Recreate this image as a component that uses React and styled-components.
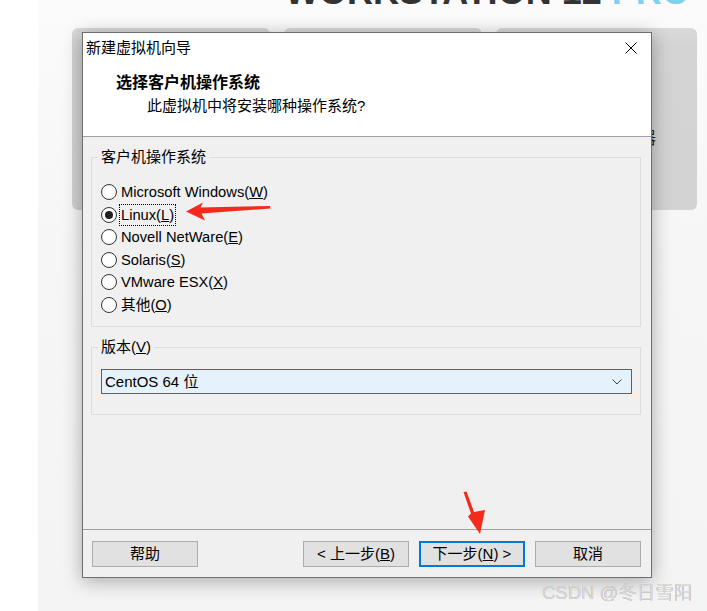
import React from 'react';
import styled, { createGlobalStyle } from 'styled-components';

const GlobalStyle = createGlobalStyle`
  html, body {
    margin: 0;
    padding: 0;
  }
  body {
    background: #fff;
    font-family: "Liberation Sans", "Noto Sans CJK SC", sans-serif;
  }
`;

const Page = styled.div`
  position: relative;
  width: 707px;
  height: 611px;
  overflow: hidden;
  background: #fff;
`;

const Stage = styled.div`
  margin-left: 38px;
  height: 100%;
  background: linear-gradient(#fbfbfb, #f6f6f6 40%, #f4f4f4);
`;

const Banner = styled.div`
  height: 10px;
  padding-left: 247px;
  display: flex;
  align-items: flex-end;
  overflow: hidden;
`;

const BannerText = styled.div`
  font-family: "Liberation Sans", sans-serif;
  font-size: 36px;
  font-weight: bold;
  line-height: 1;
  white-space: nowrap;
  color: #333;

  span {
    color: #7fd2ee;
  }
`;

const TileRow = styled.div`
  margin-top: 18px;
  padding-left: 34px;
  display: flex;
  gap: 14px;
`;

const Tile = styled.div`
  width: ${({ $w }) => $w}px;
  height: 182px;
  border-radius: 6px;
  background: linear-gradient(#dadada, #d4d4d4 10%, #d3d3d3);
  display: flex;
  justify-content: center;
  padding-top: 100px;
  box-sizing: border-box;
`;

const TileLabel = styled.div`
  font-size: 17px;
  line-height: 22px;
  color: #222;
  white-space: nowrap;
`;

const Dialog = styled.div`
  position: absolute;
  left: 82px;
  top: 32px;
  width: 570px;
  height: 546px;
  box-sizing: border-box;
  border: 1px solid #6f6f6f;
  background: #f0f0f0;
  box-shadow: 0 3px 18px rgba(0, 0, 0, 0.32);
  display: flex;
  flex-direction: column;
  font-size: 15px;
  color: #000;
`;

const Header = styled.div`
  background: #fff;
  border-bottom: 1px solid #a0a0a0;
  padding-bottom: 20px;
`;

const TitleBar = styled.div`
  height: 30px;
  padding-left: 3px;
  padding-right: 14px;
  display: flex;
  align-items: center;
  justify-content: space-between;
  line-height: 20px;
`;

const Heading = styled.div`
  margin-top: 10px;
  padding-left: 33px;
  font-size: 16px;
  font-weight: bold;
  line-height: 20px;
`;

const SubHeading = styled.div`
  margin-top: 3px;
  padding-left: 64px;
  line-height: 20px;
`;

const Body = styled.div`
  flex: 1;
  padding: 10px 10px 0 8px;
`;

const Group = styled.fieldset`
  margin: ${({ $gap }) => $gap || 0}px 0 0;
  padding: ${({ $pad }) => $pad};
  border: 1px solid #dcdcdc;
  min-width: 0;
`;

const Legend = styled.legend`
  margin-left: -3px;
  padding: 0 3px;
  line-height: 20px;
  color: #000;
`;

const OptionRow = styled.div`
  height: 22.5px;
  display: flex;
  align-items: center;
  gap: 4px;
`;

const RadioMark = styled.span`
  box-sizing: border-box;
  width: 16px;
  height: 16px;
  border: 1px solid #333;
  border-radius: 50%;
  background: #fff;
  display: flex;
  align-items: center;
  justify-content: center;
  flex: none;

  &::after {
    content: '';
    width: 8px;
    height: 8px;
    border-radius: 50%;
    background: #222;
    display: ${({ $checked }) => ($checked ? 'block' : 'none')};
  }
`;

const OptionText = styled.span`
  font-size: 14.7px;
  line-height: 20px;
  padding: 0 1px;
  margin-left: -1px;
  outline: ${({ $focused }) => ($focused ? '1px dotted #000' : 'none')};
  white-space: nowrap;
`;

const Select = styled.div`
  height: 25px;
  box-sizing: border-box;
  border: 1px solid #0078d7;
  background: #e5f1fb;
  padding: 0 9px 0 3px;
  display: flex;
  align-items: center;
  justify-content: space-between;
  line-height: 20px;
`;

const Footer = styled.div`
  border-top: 1px solid #a0a0a0;
  padding: 11px 10px 10px 9px;
  display: flex;
  justify-content: space-between;
`;

const ButtonGroup = styled.div`
  display: flex;
  gap: 10px;
`;

const Button = styled.button`
  width: 106px;
  height: 26px;
  box-sizing: border-box;
  padding: 0;
  border: ${({ $primary }) => ($primary ? '2px solid #0078d7' : '1px solid #adadad')};
  background: #e1e1e1;
  font-family: inherit;
  font-size: 15px;
  line-height: 20px;
  color: #000;
  white-space: nowrap;
`;

const Overlay = styled.svg`
  position: absolute;
  left: 0;
  top: 0;
  pointer-events: none;
`;

const Watermark = styled.div`
  position: absolute;
  left: 542px;
  top: 582px;
  font-size: 18.5px;
  line-height: 22px;
  color: #dadada;
  text-shadow: 0 0 0.6px rgba(0, 0, 0, 0.45);
  white-space: nowrap;
`;

const options = [
  { pre: 'Microsoft Windows(', key: 'W' },
  { pre: 'Linux(', key: 'L', checked: true },
  { pre: 'Novell NetWare(', key: 'E' },
  { pre: 'Solaris(', key: 'S' },
  { pre: 'VMware ESX(', key: 'X' },
  { pre: '其他(', key: 'O' }
];

const CloseIcon = () => (
  <svg width="12" height="12" viewBox="0 0 12 12">
    <path d="M0.5 0.5 L11.5 11.5 M11.5 0.5 L0.5 11.5" stroke="#000" strokeWidth="1" fill="none" />
  </svg>
);

const Chevron = () => (
  <svg width="10" height="6" viewBox="0 0 10 6">
    <polyline points="0.5,0.5 5,5 9.5,0.5" stroke="#444" strokeWidth="1" fill="none" />
  </svg>
);

const App = () => {
  return (
    <>
      <GlobalStyle />
      <Page>
        <Stage>
          <Banner>
            <BannerText>
              WORKSTATION 12 <span>PRO</span>
            </BannerText>
          </Banner>
          <TileRow>
            <Tile $w={198} />
            <Tile $w={198} />
            <Tile $w={201}>
              <TileLabel>连接远程服务器</TileLabel>
            </Tile>
          </TileRow>
        </Stage>

        <Dialog>
          <Header>
            <TitleBar>
              <span>新建虚拟机向导</span>
              <CloseIcon />
            </TitleBar>
            <Heading>选择客户机操作系统</Heading>
            <SubHeading>此虚拟机中将安装哪种操作系统?</SubHeading>
          </Header>

          <Body>
            <Group $pad="14px 9px 10px 9px">
              <Legend>客户机操作系统</Legend>
              {options.map((o) => (
                <OptionRow key={o.key}>
                  <RadioMark $checked={o.checked} />
                  <OptionText $focused={o.checked}>
                    {o.pre}
                    <u>{o.key}</u>)
                  </OptionText>
                </OptionRow>
              ))}
            </Group>
            <Group $gap={10} $pad="12px 8px 20px 9px">
              <Legend>
                版本(<u>V</u>)
              </Legend>
              <Select>
                <span>CentOS 64 位</span>
                <Chevron />
              </Select>
            </Group>
          </Body>

          <Footer>
            <Button>帮助</Button>
            <ButtonGroup>
              <Button>
                &lt; 上一步(<u>B</u>)
              </Button>
              <Button $primary>
                下一步(<u>N</u>) &gt;
              </Button>
              <Button>取消</Button>
            </ButtonGroup>
          </Footer>
        </Dialog>

        <Overlay width="707" height="611" viewBox="0 0 707 611">
          <polygon
            points="186,211.5 203,202.5 200.5,207.5 270,206 270.5,208.5 201.5,213.5 205,220.5"
            fill="#f42a1c"
          />
          <polygon
            points="463.5,492 466.5,491.5 474,512 485,510 480,534 468,516.5 471,513.5"
            fill="#f42a1c"
          />
        </Overlay>

        <Watermark>CSDN @冬日雪阳</Watermark>
      </Page>
    </>
  );
};

export default App;
